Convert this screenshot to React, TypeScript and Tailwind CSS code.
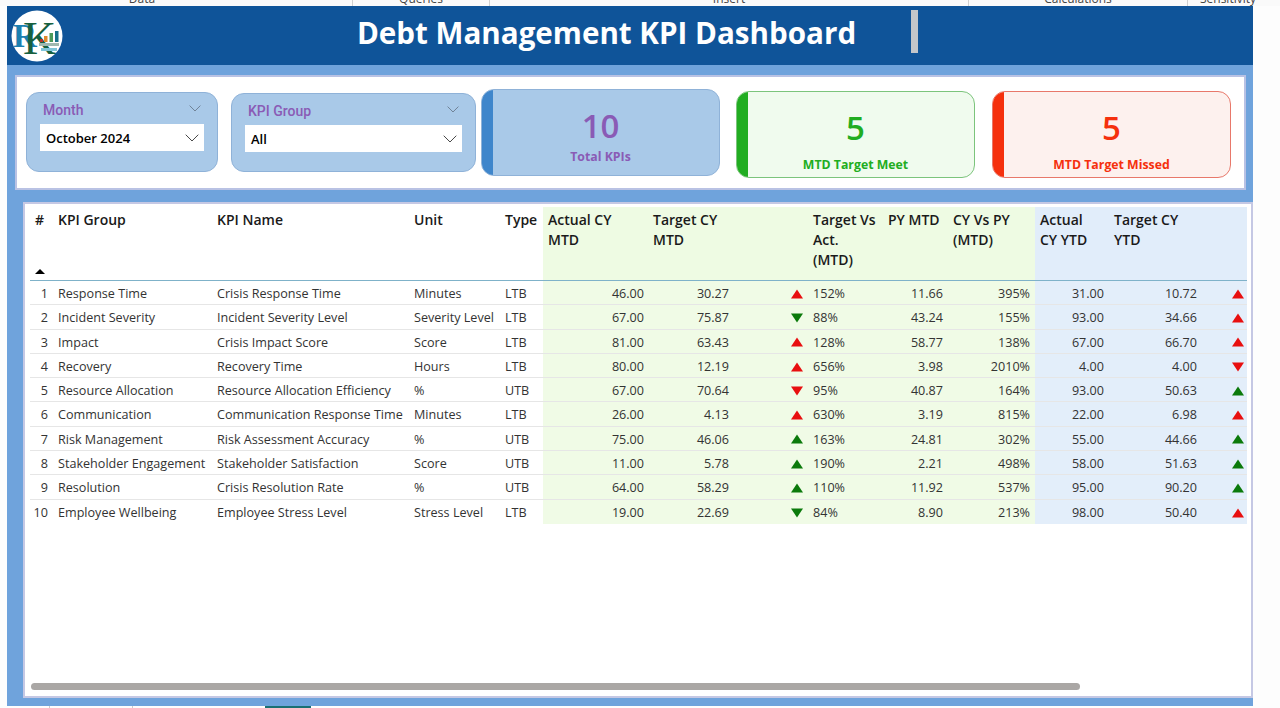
type Row = {
  no: number;
  group: string;
  name: string;
  unit: string;
  type: string;
  actual: string;
  target: string;
  mtdUp: boolean;
  mtdGood: boolean;
  tva: string;
  py: string;
  cyPy: string;
  actualYtd: string;
  targetYtd: string;
  ytdUp: boolean;
  ytdGood: boolean;
};

const rows: Row[] = [
  { no: 1, group: "Response Time", name: "Crisis Response Time", unit: "Minutes", type: "LTB", actual: "46.00", target: "30.27", mtdUp: true, mtdGood: false, tva: "152%", py: "11.66", cyPy: "395%", actualYtd: "31.00", targetYtd: "10.72", ytdUp: true, ytdGood: false },
  { no: 2, group: "Incident Severity", name: "Incident Severity Level", unit: "Severity Level", type: "LTB", actual: "67.00", target: "75.87", mtdUp: false, mtdGood: true, tva: "88%", py: "43.24", cyPy: "155%", actualYtd: "93.00", targetYtd: "34.66", ytdUp: true, ytdGood: false },
  { no: 3, group: "Impact", name: "Crisis Impact Score", unit: "Score", type: "LTB", actual: "81.00", target: "63.43", mtdUp: true, mtdGood: false, tva: "128%", py: "58.77", cyPy: "138%", actualYtd: "67.00", targetYtd: "66.70", ytdUp: true, ytdGood: false },
  { no: 4, group: "Recovery", name: "Recovery Time", unit: "Hours", type: "LTB", actual: "80.00", target: "12.19", mtdUp: true, mtdGood: false, tva: "656%", py: "3.98", cyPy: "2010%", actualYtd: "4.00", targetYtd: "4.00", ytdUp: false, ytdGood: false },
  { no: 5, group: "Resource Allocation", name: "Resource Allocation Efficiency", unit: "%", type: "UTB", actual: "67.00", target: "70.64", mtdUp: false, mtdGood: false, tva: "95%", py: "40.87", cyPy: "164%", actualYtd: "93.00", targetYtd: "50.63", ytdUp: true, ytdGood: true },
  { no: 6, group: "Communication", name: "Communication Response Time", unit: "Minutes", type: "LTB", actual: "26.00", target: "4.13", mtdUp: true, mtdGood: false, tva: "630%", py: "3.19", cyPy: "815%", actualYtd: "22.00", targetYtd: "6.98", ytdUp: true, ytdGood: false },
  { no: 7, group: "Risk Management", name: "Risk Assessment Accuracy", unit: "%", type: "UTB", actual: "75.00", target: "46.06", mtdUp: true, mtdGood: true, tva: "163%", py: "24.81", cyPy: "302%", actualYtd: "55.00", targetYtd: "44.66", ytdUp: true, ytdGood: true },
  { no: 8, group: "Stakeholder Engagement", name: "Stakeholder Satisfaction", unit: "Score", type: "UTB", actual: "11.00", target: "5.78", mtdUp: true, mtdGood: true, tva: "190%", py: "2.21", cyPy: "498%", actualYtd: "58.00", targetYtd: "51.63", ytdUp: true, ytdGood: true },
  { no: 9, group: "Resolution", name: "Crisis Resolution Rate", unit: "%", type: "UTB", actual: "64.00", target: "58.29", mtdUp: true, mtdGood: true, tva: "110%", py: "11.92", cyPy: "537%", actualYtd: "95.00", targetYtd: "90.20", ytdUp: true, ytdGood: true },
  { no: 10, group: "Employee Wellbeing", name: "Employee Stress Level", unit: "Stress Level", type: "LTB", actual: "19.00", target: "22.69", mtdUp: false, mtdGood: true, tva: "84%", py: "8.90", cyPy: "213%", actualYtd: "98.00", targetYtd: "50.40", ytdUp: true, ytdGood: false },
];

const Arrow = ({ up, good }: { up: boolean; good: boolean }) => (
  <svg width="12" height="10" viewBox="0 0 12 10" className={`mt-[2px] ${good ? "fill-[#0b7a0b]" : "fill-[#e80f0f]"}`}>
    <polygon points={up ? "6,0.5 12,9.5 0,9.5" : "0,0.5 12,0.5 6,9.5"} />
  </svg>
);

// wide, shallow chevron used by the slicers
const Chevron = ({ width, className }: { width: number; className: string }) => (
  <svg width={width} height={width * 0.55} viewBox="0 0 20 11" fill="none" stroke="currentColor" strokeWidth="1.3" className={className}>
    <polyline points="1,1 10,10 19,1" />
  </svg>
);

const Logo = () => (
  <svg width="52" height="52" viewBox="0 0 52 52" className="shrink-0">
    <circle cx="26" cy="26" r="25.5" fill="#ffffff" />
    <text x="2" y="37" fontFamily="Liberation Serif" fontSize="33" fontWeight="700" fill="#1c7fb0">R</text>
    <text x="12" y="44" fontFamily="Liberation Serif" fontSize="46" fill="#17603f">K</text>
    <rect x="29" y="29" width="3" height="3" fill="#b8322a" />
    <rect x="33" y="26" width="3.5" height="6" fill="#e08a2e" />
    <rect x="38.5" y="23" width="3.5" height="9" fill="#4c9a5a" />
    <rect x="44" y="21" width="3.5" height="11" fill="#17708a" />
    <rect x="28" y="33" width="20" height="3" fill="#9fb8b0" />
    <rect x="30" y="38" width="16" height="3" fill="#7fc4d8" />
  </svg>
);

const Filter = ({ label, value, className }: { label: string; value: string; className: string }) => (
  <div className={`flex flex-col rounded-[13px] border border-[#8fb2d8] bg-[#a9c9e8] pl-[13px] pr-[13px] ${className}`}>
    <div className="flex h-[31px] items-center justify-between pl-[3px] pr-[3px] pt-[4px]">
      <span className="font-['Roboto',sans-serif] text-[14px] font-medium text-[#8a5bb5]">{label}</span>
      <Chevron width={12} className="mb-[4px] text-[#5f6f80]" />
    </div>
    <div className="flex h-[27px] items-center justify-between bg-white pl-[6px] pr-[5px]">
      <span className="pt-[2px] text-[13px] font-semibold text-black">{value}</span>
      <Chevron width={14} className="text-[#333333]" />
    </div>
  </div>
);

const Stat = ({ value, label, className, barClass, textClass, labelClass }: { value: string; label: string; className: string; barClass: string; textClass: string; labelClass: string }) => (
  <div className={`flex h-[87px] w-[239px] overflow-hidden rounded-[13px] border ${className}`}>
    <div className={`w-[11px] shrink-0 ${barClass}`} />
    <div className={`flex flex-1 flex-col items-center pr-[11px] ${textClass}`}>
      <span className="mt-[13px] text-[33px] font-semibold leading-[46px]">{value}</span>
      <span className={`text-[12.3px] font-bold ${labelClass}`}>{label}</span>
    </div>
  </div>
);

const HeadCell = ({ className, children }: { className: string; children?: React.ReactNode }) => (
  <div className={`shrink-0 whitespace-nowrap pl-[5px] pt-[3px] ${className}`}>{children}</div>
);

const App = () => {
  return (
    <div className="flex h-[708px] w-[1280px] flex-col overflow-hidden bg-[#fdfdfd] font-['Open_Sans',sans-serif]">
      {/* cut off ribbon labels */}
      <div className="flex h-[6px] shrink-0 overflow-hidden bg-[#fafafa] text-[12px] leading-[6px] text-[#444444]">
        <div className="w-[352px] pr-[68px] text-center"><span className="relative top-[-4px]">Data</span></div>
        <div className="w-[137px] border-l border-[#d0d0d0] text-center"><span className="relative top-[-4px]">Queries</span></div>
        <div className="w-[479px] border-l border-[#d0d0d0] text-center"><span className="relative top-[-4px]">Insert</span></div>
        <div className="w-[219px] border-l border-[#d0d0d0] text-center"><span className="relative top-[-4px]">Calculations</span></div>
        <div className="w-[81px] border-l border-[#d0d0d0] text-center"><span className="relative top-[-4px]">Sensitivity</span></div>
      </div>

      <div className="ml-[7px] flex h-[700px] w-[1246px] shrink-0 flex-col bg-[#6fa3dc]">
        <header className="flex h-[59px] shrink-0 items-start bg-[#0f5499] pl-[4px] pt-[4px]">
          <Logo />
          <h1 className="ml-[291px] w-[505px] whitespace-nowrap text-center text-[29.6px] font-bold leading-[46px] text-white">Debt Management KPI Dashboard</h1>
          <div className="ml-[52px] h-[43px] w-[7px] bg-[#c3c6ca]" />
        </header>

        {/* slicers and cards */}
        <section className="ml-[8px] mt-[10px] flex h-[115px] w-[1231px] shrink-0 items-start border-2 border-[#b9c2e4] bg-white pl-[9px] pt-[12px]">
          <Filter label="Month" value="October 2024" className="mt-[3px] h-[80px] w-[192px]" />
          <Filter label="KPI Group" value="All" className="ml-[13px] mt-[4px] h-[79px] w-[245px]" />
          <div className="ml-[5px]">
            <Stat value="10" label="Total KPIs" className="border-[#8fb2d8] bg-[#a9c9e8]" barClass="bg-[#3f86cb]" textClass="text-[#8a5bb5]" labelClass="-mt-[1px]" />
          </div>
          <div className="ml-[16px] mt-[2px]">
            <Stat value="5" label="MTD Target Meet" className="border-[#7cc47c] bg-[#f0fbee]" barClass="bg-[#21ad21]" textClass="text-[#21ad21]" labelClass="mt-[5px]" />
          </div>
          <div className="ml-[17px] mt-[2px]">
            <Stat value="5" label="MTD Target Missed" className="border-[#e8786a] bg-[#fdf1ee]" barClass="bg-[#f5300d]" textClass="text-[#f5300d]" labelClass="mt-[5px]" />
          </div>
        </section>

        {/* table */}
        <section className="ml-[16px] mt-[12px] flex h-[496px] w-[1230px] shrink-0 flex-col border-2 border-[#c5c8e4] bg-white pl-[5px] pr-[4px] pt-[3px]">
          <div className="flex-1 overflow-hidden">
            <div className="flex h-[74px] border-b border-[#7fb2c9] text-[14px] font-semibold leading-[20px] text-[#1a1a1a]">
              <HeadCell className="relative w-[23px]">
                #
                <svg width="10" height="5" viewBox="0 0 10 5" className="absolute left-[5px] top-[62px] fill-black"><polygon points="5,0 10,5 0,5" /></svg>
              </HeadCell>
              <HeadCell className="w-[159px]">KPI Group</HeadCell>
              <HeadCell className="w-[197px]">KPI Name</HeadCell>
              <HeadCell className="w-[91px]">Unit</HeadCell>
              <HeadCell className="w-[43px]">Type</HeadCell>
              <HeadCell className="w-[105px] bg-[#eefbe3]">Actual CY<br />MTD</HeadCell>
              <HeadCell className="w-[85px] bg-[#eefbe3]">Target CY<br />MTD</HeadCell>
              <HeadCell className="w-[75px] bg-[#eefbe3]" />
              <HeadCell className="w-[75px] bg-[#eefbe3]">Target Vs<br />Act.<br />(MTD)</HeadCell>
              <HeadCell className="w-[65px] bg-[#eefbe3]">PY MTD</HeadCell>
              <HeadCell className="w-[87px] bg-[#eefbe3]">CY Vs PY<br />(MTD)</HeadCell>
              <HeadCell className="w-[74px] bg-[#e1edfa]">Actual<br />CY YTD</HeadCell>
              <HeadCell className="w-[93px] bg-[#e1edfa]">Target CY<br />YTD</HeadCell>
              <HeadCell className="w-[45px] bg-[#e1edfa]" />
            </div>
            {rows.map((r) => (
              <div key={r.no} className="flex h-[24.3px] items-stretch border-b border-[#e6e6e6] text-[12.6px] leading-[26px] text-[#333333] last:border-b-0">
                <div className="w-[23px] shrink-0 pr-[5px] text-right">{r.no}</div>
                <div className="w-[159px] shrink-0 whitespace-nowrap pl-[5px]">{r.group}</div>
                <div className="w-[197px] shrink-0 whitespace-nowrap pl-[5px]">{r.name}</div>
                <div className="w-[91px] shrink-0 whitespace-nowrap pl-[5px]">{r.unit}</div>
                <div className="w-[43px] shrink-0 pl-[5px]">{r.type}</div>
                <div className="w-[105px] shrink-0 bg-[#f0fbe6] pr-[4px] text-right">{r.actual}</div>
                <div className="w-[85px] shrink-0 bg-[#f0fbe6] pr-[4px] text-right">{r.target}</div>
                <div className="flex w-[75px] shrink-0 items-center justify-end bg-[#f0fbe6] pr-[5px]"><Arrow up={r.mtdUp} good={r.mtdGood} /></div>
                <div className="w-[75px] shrink-0 bg-[#f0fbe6] pl-[5px]">{r.tva}</div>
                <div className="w-[65px] shrink-0 bg-[#f0fbe6] pr-[5px] text-right">{r.py}</div>
                <div className="w-[87px] shrink-0 bg-[#f0fbe6] pr-[5px] text-right">{r.cyPy}</div>
                <div className="w-[74px] shrink-0 bg-[#e3eefa] pr-[5px] text-right">{r.actualYtd}</div>
                <div className="w-[93px] shrink-0 bg-[#e3eefa] pr-[5px] text-right">{r.targetYtd}</div>
                <div className="flex w-[45px] shrink-0 items-center justify-end bg-[#e3eefa] pr-[3px]"><Arrow up={r.ytdUp} good={r.ytdGood} /></div>
              </div>
            ))}
          </div>
          <div className="mb-[6px] ml-[1px] h-[7px] w-[1049px] shrink-0 rounded-full bg-[#aaa7a5]" />
        </section>
      </div>

      {/* sheet tabs peeking out at the bottom */}
      <div className="flex h-[2px] shrink-0">
        <div className="ml-[49px] w-px bg-[#cccccc]" />
        <div className="ml-[82px] w-px bg-[#cccccc]" />
        <div className="ml-[132px] w-[46px] bg-[#1a6f73]" />
      </div>
    </div>
  );
};

export default App;
